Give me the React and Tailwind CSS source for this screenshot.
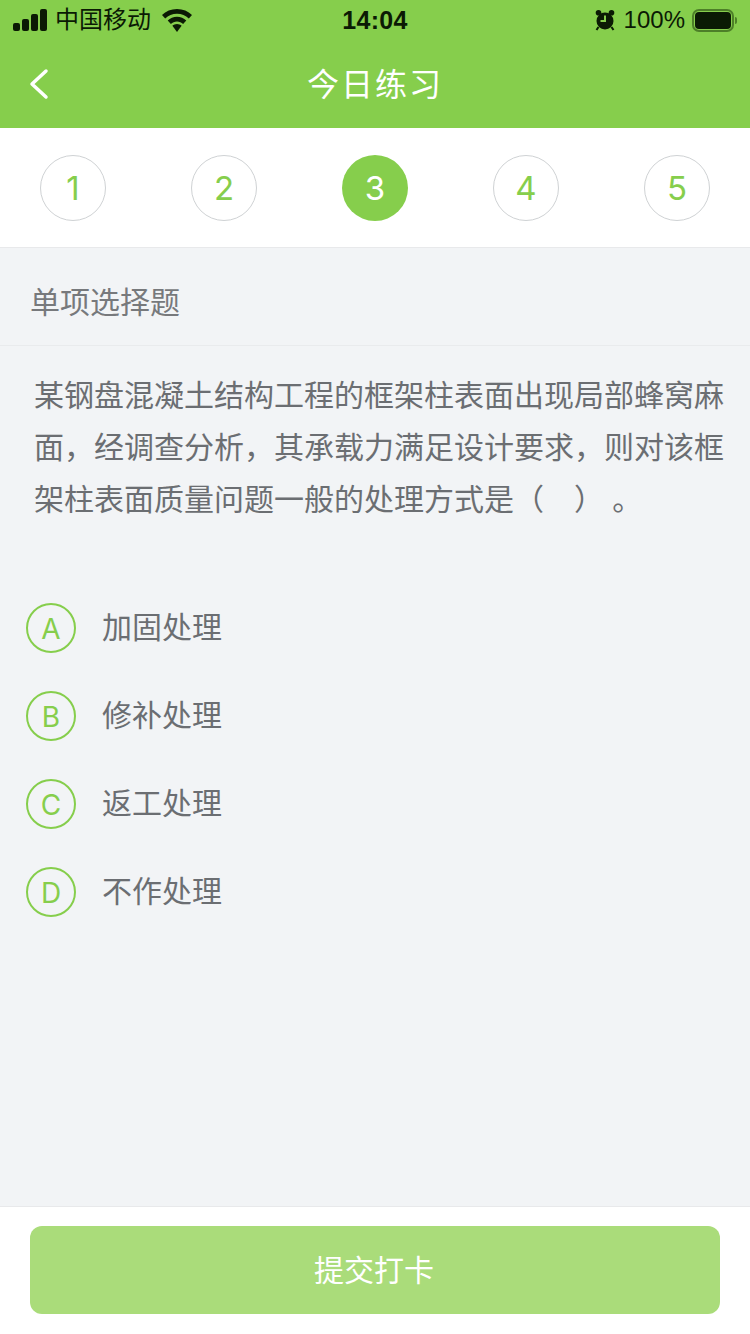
const FONT = "font-['Liberation_Sans','Noto_Sans_CJK_SC',sans-serif]";

const question = '某钢盘混凝土结构工程的框架柱表面出现局部蜂窝麻面，经调查分析，其承载力满足设计要求，则对该框架柱表面质量问题一般的处理方式是（　）\u00a0。';

const steps = [1, 2, 3, 4, 5];
const options = [
  ['A', '加固处理'],
  ['B', '修补处理'],
  ['C', '返工处理'],
  ['D', '不作处理'],
];

function StatusBar() {
  return (
    <div className="h-10 flex items-center justify-between pl-[13px] pr-[13px] text-[#0b1a04]">
      <div className="flex items-center w-[260px]">
        <svg width="34" height="22" viewBox="0 0 34 22" fill="currentColor">
          <rect x="0" y="14" width="7" height="8" rx="2" />
          <rect x="9" y="10" width="7" height="12" rx="2" />
          <rect x="18" y="5" width="7" height="17" rx="2" />
          <rect x="27" y="0" width="7" height="22" rx="2" />
        </svg>
        <span className="ml-[8px] text-[24px] leading-none">中国移动</span>
        <svg className="ml-[11px]" width="30" height="23" viewBox="0 0 30 23" fill="currentColor">
          <path d="M15 0C9 0 3.900 2.200 0 6l3.200 3.400C6.300 6.500 10.400 4.700 15 4.700s8.700 1.800 11.800 4.700L30 6C26.100 2.200 21 0 15 0z" />
          <path d="M15 7.800c-3.600 0-6.800 1.400-9.300 3.700l3.200 3.400c1.600-1.500 3.700-2.400 6.100-2.400s4.500.9 6.100 2.400l3.200-3.400c-2.500-2.300-5.700-3.700-9.300-3.700z" />
          <path d="M15 15c-1.800 0-3.400.7-4.600 1.800L15 23l4.600-6.200C18.400 15.700 16.800 15 15 15z" />
        </svg>
      </div>
      <span className="text-[25px] leading-none font-bold tracking-[0.3px]">14:04</span>
      <div className="flex items-center justify-end w-[260px]">
        <svg width="20" height="22" viewBox="0 0 20 22" fill="currentColor">
          <circle cx="10" cy="12" r="8.500" />
          <circle cx="3.500" cy="3.800" r="2.800" />
          <circle cx="16.500" cy="3.800" r="2.800" />
          <path d="M9 6.500h2v6.500H5.500v-2H9z" fill="#86ce4c" />
          <path d="M3.500 18l-2 3M16.500 18l2 3" stroke="currentColor" strokeWidth="2" />
        </svg>
        <span className="ml-[9px] text-[24px] leading-none">100%</span>
        <div className="ml-[7px] flex items-center">
          <div className="w-[42px] h-[23px] rounded-[7px] border-2 border-[#4d7f28] p-[1px]">
            <div className="w-full h-full rounded-[4px] bg-[#0b1a04]" />
          </div>
          <div className="w-[2px] h-[7px] ml-[1px] rounded-r-sm bg-[#4d7f28]" />
        </div>
      </div>
    </div>
  );
}

function NavBar() {
  return (
    <div className="relative h-[88px] flex items-center justify-center pt-[2px]">
      <svg className="absolute left-[29px] top-[28px]" width="20" height="32" viewBox="0 0 20 32" fill="none" stroke="white" strokeWidth="3.500" strokeLinecap="round" strokeLinejoin="round">
        <path d="M17 3 3 16l14 13" />
      </svg>
      <h1 className="text-[32px] leading-none font-normal text-white tracking-[2px]">今日练习</h1>
    </div>
  );
}

function StepRow() {
  return (
    <div className="h-[120px] bg-white border-b border-[#e8e9eb] flex items-start justify-between px-[40px] pt-[27px]">
      {steps.map((n) =>
        n === 3 ? (
          <div key={n} className="w-[66px] h-[66px] pt-[1px] rounded-full bg-[#86ce4c] text-white flex items-center justify-center text-[33px] font-['Inter',sans-serif] font-normal">
            {n}
          </div>
        ) : (
          <div key={n} className="w-[66px] h-[66px] pt-[1px] rounded-full border border-[#cfd2d4] text-[#86ce4c] flex items-center justify-center text-[33px] font-['Inter',sans-serif] font-normal">
            {n}
          </div>
        )
      )}
    </div>
  );
}

function Option({ letter, label }) {
  return (
    <div className="h-[88px] flex items-center pl-[26px]">
      <div className="w-[50px] h-[50px] pt-[1px] rounded-full border-2 border-[#86ce4c] text-[#86ce4c] flex items-center justify-center text-[28px] font-['Inter',sans-serif] font-normal">
        {letter}
      </div>
      <span className="ml-[26px] text-[30px] leading-none text-[#6b6e72]">{label}</span>
    </div>
  );
}

export default function App() {
  return (
    <div className={`${FONT} w-[750px] h-[1334px] flex flex-col bg-[#f2f4f6] overflow-hidden`}>
      <div className="bg-[#86ce4c]">
        <StatusBar />
        <NavBar />
      </div>
      <StepRow />
      <div className="h-[98px] border-b border-[#e9ebed] flex items-center pl-[30px] pt-[12px] text-[30px] text-[#77797c]">
        单项选择题
      </div>
      <p className="pt-[24px] pl-[34px] pr-[26px] text-[30px] leading-[52px] text-[#6b6e72]">{question}</p>
      <div className="mt-[58px]">
        {options.map(([letter, label]) => (
          <Option key={letter} letter={letter} label={label} />
        ))}
      </div>
      <div className="mt-auto h-[128px] bg-white border-t border-[#e8e9eb] px-[30px] pt-[19px]">
        <button className="w-full h-[88px] rounded-[12px] bg-[#aadc7a] text-white text-[30px] pr-[2px]">
          提交打卡
        </button>
      </div>
    </div>
  );
}
